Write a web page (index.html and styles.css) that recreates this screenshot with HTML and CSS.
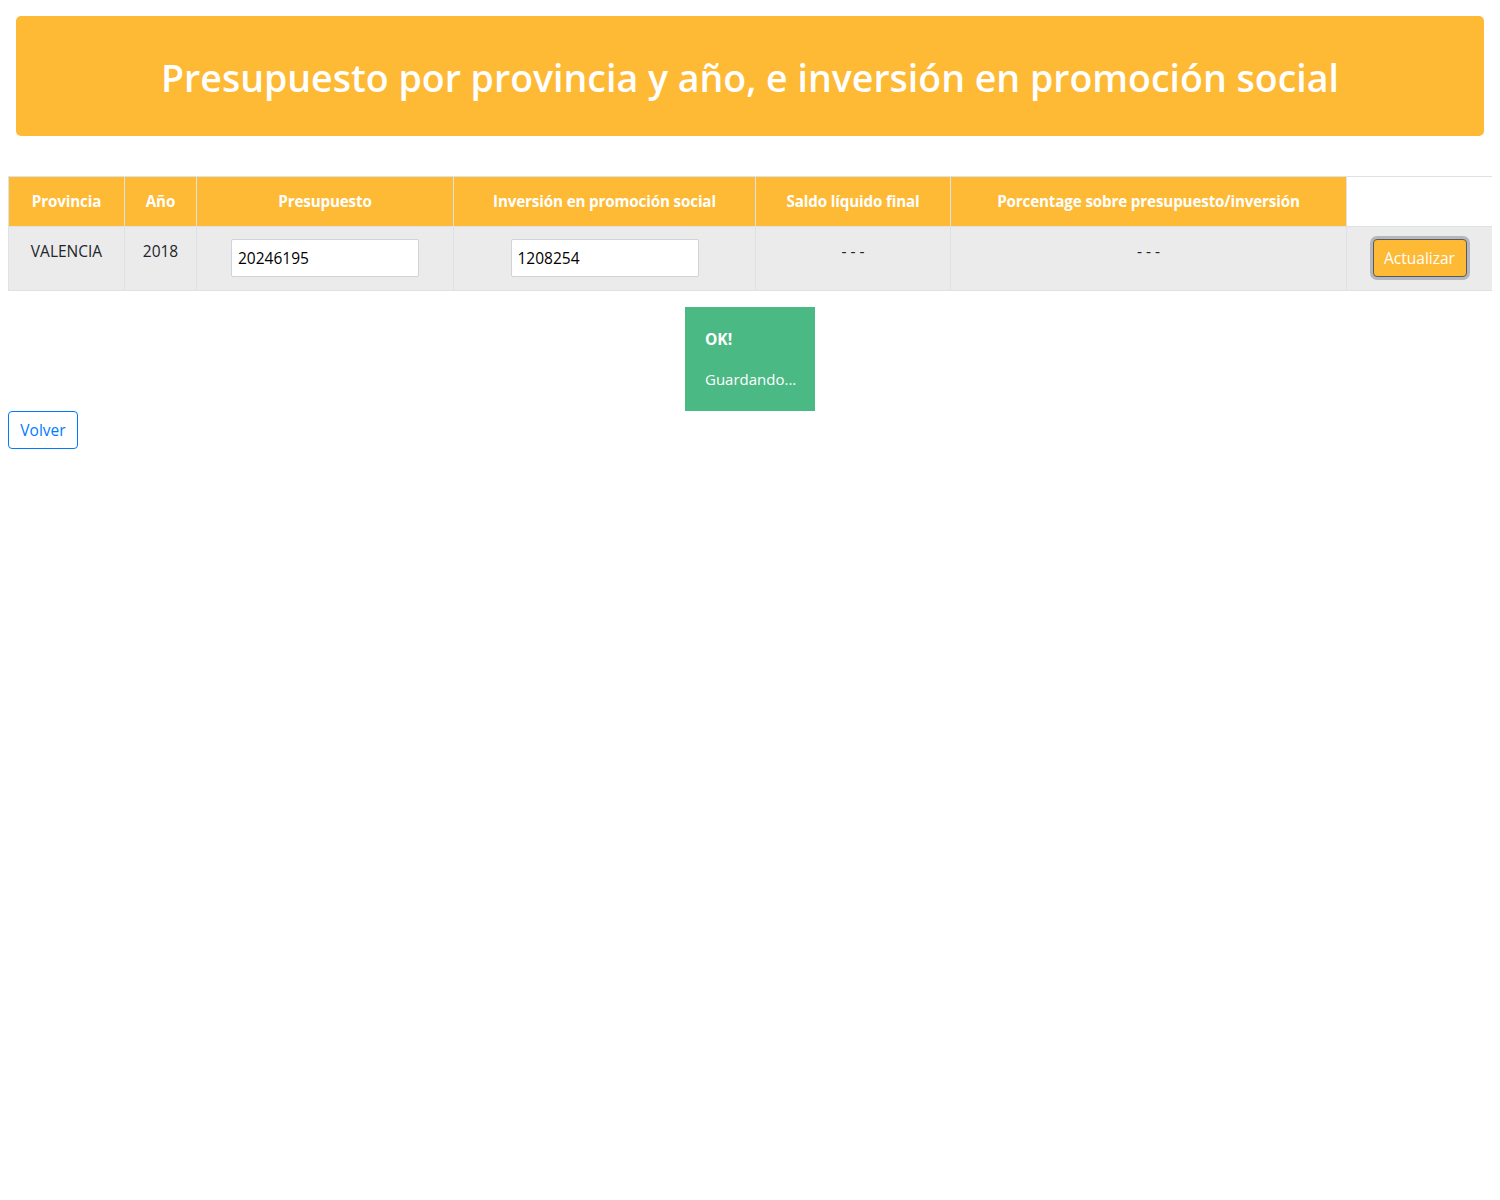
FILE: index.html
```
<!DOCTYPE html>
<html lang="es">
<head>
<meta charset="utf-8">
<title>Presupuesto</title>
<link rel="stylesheet" href="styles.css">
</head>
<body>
<div class="banner"><h1 class="banner-title">Presupuesto por provincia y año, e inversión en promoción social</h1></div>
<table class="tbl">
<colgroup>
<col class="c1"><col class="c2"><col class="c3"><col class="c4"><col class="c5"><col class="c6"><col class="c7">
</colgroup>
<thead>
<tr>
<th>Provincia</th><th>Año</th><th>Presupuesto</th><th>Inversión en promoción social</th><th>Saldo líquido final</th><th>Porcentage sobre presupuesto/inversión</th><th class="blank"></th>
</tr>
</thead>
<tbody>
<tr>
<td>VALENCIA</td><td>2018</td>
<td><input class="inp" type="text" value="20246195"></td>
<td><input class="inp" type="text" value="1208254"></td>
<td>- - -</td><td>- - -</td>
<td><button class="btn-upd">Actualizar</button></td>
</tr>
</tbody>
</table>
<div class="toast-wrap">
<div class="toast"><p class="toast-title">OK!</p><p class="toast-msg">Guardando...</p></div>
</div>
<button class="btn-back">Volver</button>
</body>
</html>
```
FILE: styles.css
```
body {
  margin: 8px;
  font-family: "Open Sans", "Noto Sans", sans-serif;
  font-size: 15.5px;
  line-height: 24px;
  color: #212529;
  background: #fff;
}
.banner {
  background: #feb935;
  border-radius: 5px;
  margin: 8px 8px 40px 8px;
  height: 120px;
  display: flex;
  align-items: center;
  justify-content: center;
}
.banner-title {
  margin: 0;
  color: #fff;
  font-weight: 600;
  font-size: 37.5px;
  line-height: 48px;
  padding-top: 4px;
}
.tbl {
  width: 1484px;
  table-layout: fixed;
  border-collapse: collapse;
  margin-bottom: 16px;
}
.c1 { width: 116px; }
.c2 { width: 72px; }
.c3 { width: 257px; }
.c4 { width: 302px; }
.c5 { width: 195px; }
.c6 { width: 396px; }
.c7 { width: 146px; }
.tbl th, .tbl td {
  border: 1px solid #dee2e6;
  padding: 12px;
  text-align: center;
  vertical-align: top;
}
.tbl th {
  background: #feb935;
  color: #fff;
  font-weight: 700;
  font-size: 15.2px;
  letter-spacing: -0.15px;
  line-height: 24px;
  padding-bottom: 13px;
}
.tbl th.blank { background: #fff; }
.tbl td {
  background: #ebebeb;
  height: 39px;
}
.inp {
  display: block;
  margin: 0 auto;
  width: 188px;
  height: 38px;
  box-sizing: border-box;
  border: 1px solid #ced4da;
  border-radius: 2px;
  padding: 0 6px;
  font-family: inherit;
  font-size: 15.5px;
  color: #000;
  background: #fff;
}
.btn-upd {
  display: block;
  margin: 0 auto;
  background: #feb935;
  color: #fff;
  border: 1px solid #5a5a5a;
  border-radius: 4px;
  box-shadow: 0 0 0 3px #b4b7bd;
  height: 38px;
  width: 94px;
  font-family: inherit;
  font-size: 15.5px;
  padding: 0;
}
.toast-wrap {
  display: flex;
  justify-content: center;
}
.toast {
  background: #4bb984;
  color: #fff;
  padding: 20px;
  width: 90px;
}
.toast-title {
  margin: 0 0 16px 0;
  font-weight: 700;
  font-size: 15.5px;
}
.toast-msg {
  margin: 0;
  font-size: 15px;
  white-space: nowrap;
}
.btn-back {
  display: block;
  background: #fff;
  color: #007bff;
  border: 1px solid #007bff;
  border-radius: 4px;
  height: 38px;
  width: 70px;
  padding: 0;
  font-family: inherit;
  font-size: 15.5px;
}
```
